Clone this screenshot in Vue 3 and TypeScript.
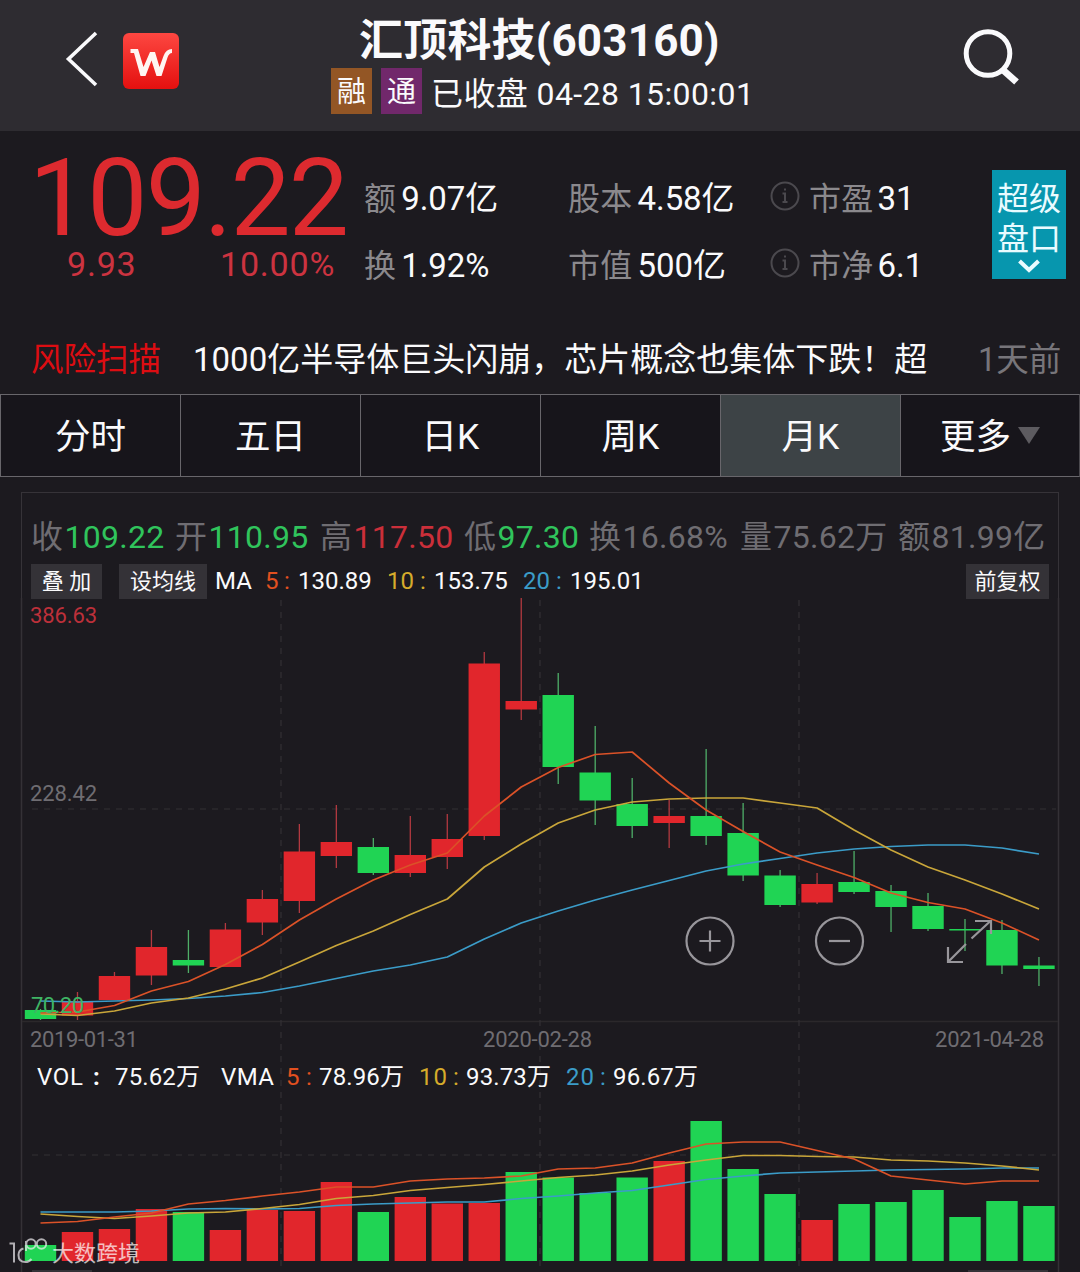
<script setup lang="ts">
type Tone = 'up' | 'down'
// [high, body top, body bottom, low, tone, volume top, volume tone]
type Bar = [number, number, number, number, Tone, number, Tone]

const bars: Bar[] = [
  [1009, 1010, 1019, 1020, 'down', 1245, 'down'],
  [992, 1001, 1015.5, 1020, 'up', 1232, 'up'],
  [972, 976, 1000, 1000, 'up', 1229, 'up'],
  [930, 947, 975.5, 985, 'up', 1209, 'up'],
  [930, 960, 965.5, 973, 'down', 1212, 'down'],
  [923, 929.5, 967, 967, 'up', 1230, 'up'],
  [890, 899, 922.5, 935, 'up', 1210, 'up'],
  [824, 851.5, 901, 913, 'up', 1211, 'up'],
  [805, 842, 856, 868, 'up', 1182, 'up'],
  [838, 847, 873, 875, 'down', 1212, 'down'],
  [816, 855, 873, 877, 'up', 1197, 'up'],
  [814, 839, 857, 869, 'up', 1203.5, 'up'],
  [652, 663.5, 836, 840, 'up', 1203, 'up'],
  [598, 701, 709.5, 720, 'up', 1172, 'down'],
  [673, 695, 767, 784, 'down', 1177.5, 'down'],
  [726, 772.5, 800.5, 825, 'down', 1193, 'down'],
  [778, 804, 826, 838, 'down', 1177.5, 'down'],
  [800, 816, 823, 848, 'up', 1161, 'up'],
  [749, 816, 836, 845, 'down', 1121, 'down'],
  [803, 833, 875.5, 881, 'down', 1169, 'down'],
  [870, 875.5, 905, 907, 'down', 1194, 'down'],
  [873, 884, 902.5, 904, 'up', 1220, 'up'],
  [851, 882, 892, 894, 'down', 1204, 'down'],
  [885, 891, 907, 932, 'down', 1202, 'down'],
  [893, 906, 929, 931, 'down', 1190, 'down'],
  [919, 929, 930.5, 951, 'down', 1217, 'down'],
  [920, 930, 965.5, 974, 'down', 1201, 'down'],
  [957, 965.5, 969, 986, 'down', 1206, 'down'],
]

const cx = (i: number): number => 40.5 + i * 36.98
const path = (ys: number[]): string => ys.map((y, i) => `${cx(i).toFixed(1)},${y}`).join(' ')

const lines: { tone: string; ys: number[] }[] = [
  { tone: 'ma20', ys: [1001, 1002, 1001, 1000, 998.5, 996, 992.5, 986, 978.5, 971, 965, 957, 939, 923, 911, 900, 890, 880.5, 871, 864, 858.5, 853, 849, 846.5, 845, 845, 848, 854] },
  { tone: 'ma10', ys: [1014, 1015.5, 1011, 1003, 998, 989, 978, 962, 945.5, 931, 914.5, 899, 867, 844, 823, 810, 802, 799, 798, 798, 803, 808, 830, 850, 867, 880, 894, 909] },
  { tone: 'ma5', ys: [1013, 1012, 1005.5, 991, 981.5, 964.5, 944.5, 920, 899, 880, 865, 853, 816, 787, 767.5, 754.5, 752, 783, 810, 831.5, 852, 865, 877.5, 893, 902.5, 909, 923, 940] },
  { tone: 'ma20', ys: [1212, 1212, 1212, 1211, 1209, 1208.5, 1209, 1208.5, 1205.5, 1204, 1203, 1202, 1202, 1198.5, 1196, 1193, 1190.5, 1185, 1179.5, 1176, 1173, 1172, 1171, 1170, 1169.5, 1169, 1168, 1168] },
  { tone: 'ma10', ys: [1214, 1216.5, 1218.5, 1216, 1213, 1212, 1208.5, 1204.5, 1198.5, 1195.5, 1190.5, 1187.5, 1184.5, 1181, 1177.5, 1175, 1171, 1165, 1160, 1155.5, 1155.5, 1156.5, 1157, 1160, 1161, 1163, 1166, 1170] },
  { tone: 'ma5', ys: [1223, 1221.5, 1217, 1213, 1204, 1200.5, 1196, 1192, 1187, 1187, 1181, 1179, 1178, 1176, 1169, 1168, 1163, 1153, 1144, 1142, 1142, 1150.5, 1159, 1176, 1180, 1184, 1181, 1181] },
]

const stats = [
  [{ k: '额', v: '9.07亿' }, { k: '股本', v: '4.58亿' }, { k: '市盈', v: '31', info: true }],
  [{ k: '换', v: '1.92%' }, { k: '市值', v: '500亿' }, { k: '市净', v: '6.1', info: true }],
]

const tabs = ['分时', '五日', '日K', '周K', '月K', '更多']

const ohlc = [
  { k: '收', v: '109.22', c: 'green' },
  { k: '开', v: '110.95', c: 'green' },
  { k: '高', v: '117.50', c: 'red' },
  { k: '低', v: '97.30', c: 'green' },
  { k: '换', v: '16.68%', c: 'dim' },
  { k: '量', v: '75.62万', c: 'dim' },
  { k: '额', v: '81.99亿', c: 'dim' },
]

// Legend tokens: text, x, rendered length, tone
const vol: [string, number, number, string][] = [
  ['VOL', 37, 46, 'w'], [':', 93, 6, 'w bold'], ['75.62万', 115, 85, 'w'], ['VMA', 221, 53, 'w'],
  ['5', 286, 14, 'o'], [':', 306, 6, 'o'], ['78.96万', 319, 85, 'w'],
  ['10', 419, 28, 'y'], [':', 453, 6, 'y'], ['93.73万', 466, 85, 'w'],
  ['20', 566, 28, 'b'], [':', 600, 6, 'b'], ['96.67万', 613, 85, 'w'],
]
</script>

<template>
  <div class="app">
    <header class="top">
      <div class="left">
        <svg class="back" width="34" height="58" viewBox="0 0 34 58"><path d="M31 3 3.500 29 31 55" /></svg>
        <div class="logo">
          <svg width="56" height="56" viewBox="0 0 56 56"><path d="M7.500 16H15l5.500 18L27 19h5l4.500 15 4-11q2.500-7 8.500-7v4q-3 0-4.500 4.500L38.500 43h-5L28.500 27.500 22.500 43h-5L11 20H7.500z" /></svg>
        </div>
      </div>
      <div class="center">
        <h1>汇顶科技(603160)</h1>
        <div class="sub">
          <span class="badge rong">融</span><span class="badge tong">通</span><span class="state">已收盘 04-28 15:00:01</span>
        </div>
      </div>
      <svg class="search" width="58" height="60" viewBox="0 0 58 60"><circle cx="26" cy="26.500" r="21.800" /><path d="M41 43 54.500 55" /></svg>
    </header>

    <section class="quote">
      <div class="price">
        <div class="big">109.22</div>
        <div class="chg"><span class="abs">9.93</span><span>10.00%</span></div>
      </div>
      <div class="stats">
        <div v-for="(row, r) in stats" :key="r" class="srow">
          <div v-for="s in row" :key="s.k" class="stat">
            <svg v-if="'info' in s" class="info" width="30" height="30" viewBox="0 0 30 30"><circle cx="15" cy="15" r="13.500" /><path d="M15 7.500v2M12.500 12.500H15V21M12.500 21h5" /></svg>
            <span class="k">{{ s.k }}</span><span class="v">{{ s.v }}</span>
          </div>
        </div>
      </div>
      <div class="super">
        <span>超级</span><span>盘口</span>
        <svg width="24" height="14" viewBox="0 0 24 14"><path d="M2.500 2 12 11 21.500 2" /></svg>
      </div>
    </section>

    <section class="news">
      <span class="risk">风险扫描</span>
      <span class="headline">1000亿半导体巨头闪崩，芯片概念也集体下跌！超</span>
      <span class="ago">1天前</span>
    </section>

    <nav class="tabs">
      <div v-for="t in tabs" :key="t" class="tab" :class="{ on: t === '月K' }">
        <span>{{ t }}</span><i v-if="t === '更多'" class="caret"></i>
      </div>
    </nav>

    <main class="panel">
      <div class="ohlc">
        <div v-for="o in ohlc" :key="o.k" class="cell"><span>{{ o.k }}</span><span :class="o.c">{{ o.v }}</span></div>
      </div>
      <div class="tools">
        <span class="btn add">叠 加</span>
        <span class="btn avg">设均线</span>
        <div class="ma">
          <span>MA</span>
          <span class="o">5</span><span class="o">:</span><span>130.89</span>
          <span class="y">10</span><span class="y">:</span><span>153.75</span>
          <span class="b">20</span><span class="b">:</span><span>195.01</span>
        </div>
        <span class="btn adj">前复权</span>
      </div>
    </main>

    <div class="chart">
      <svg width="1080" height="674" viewBox="0 598 1080 674">
        <g class="frame"><path d="M21.500 598V1272M1058.500 598V1272" /><path class="base" d="M22 1021.500H1058" /></g>
        <g class="grid"><path d="M281 600V1272M540 600V1272M799 600V1272" /><path d="M32 809H1056M32 1155H1056" /></g>
        <g v-for="(b, i) in bars" :key="i">
          <line :class="['wick', b[4]]" :x1="cx(i)" :x2="cx(i)" :y1="b[0]" :y2="b[3]" />
          <rect :class="b[4]" :x="cx(i) - 15.7" :y="b[1]" width="31.400" :height="b[2] - b[1]" />
          <rect :class="b[6]" :x="cx(i) - 15.7" :y="b[5]" width="31.400" :height="1261 - b[5]" />
        </g>
        <polyline v-for="(l, i) in lines" :key="'l' + i" :class="['line', l.tone]" :points="path(l.ys)" />

        <g class="axis">
          <text class="hi" x="30" y="623" textLength="67">386.63</text>
          <text x="30" y="801" textLength="67">228.42</text>
          <text class="lo" x="31" y="1013" textLength="53">70.20</text>
          <text x="30" y="1047" textLength="108">2019-01-31</text>
          <text x="483" y="1047" textLength="109">2020-02-28</text>
          <text x="935" y="1047" textLength="109">2021-04-28</text>
        </g>
        <g class="vol">
          <text v-for="(t, i) in vol" :key="'t' + i" :class="t[3]" :x="t[1]" y="1085" :textLength="t[2]">{{ t[0] }}</text>
        </g>

        <g class="ctrl">
          <circle cx="710" cy="941" r="23.500" /><path d="M699.500 941h21M710 930.500v21" />
          <circle cx="839.500" cy="941" r="23.500" /><path d="M829 941h21" />
          <path d="M948 962 966 944M971.500 938.500 990.500 921M948 947v15h15M975 921h16v13" />
        </g>
        <path class="stub" d="M32 1271H92M968 1271H1048" />
        <g class="mark">
          <path d="M9.500 1243.500h4.500v19M23.500 1248.500q-5 1.500-5 6.500 0 7 7 7 3.500 0 6-3" />
          <path d="M26 1241v10" />
          <circle cx="31" cy="1244" r="4.700" /><circle cx="41.500" cy="1244" r="4.700" />
          <text x="52" y="1261" textLength="88">大数跨境</text>
        </g>
      </svg>
    </div>
  </div>
</template>

<style>
body { background: #1c1a1f; }
</style>

<style scoped>
.app {
  width: 1080px;
  height: 1272px;
  overflow: hidden;
  display: flex;
  flex-direction: column;
  background: #1c1a1f;
  color: #fafafc;
  font-family: Roboto, "Noto Sans CJK SC", sans-serif;
  white-space: nowrap;
}
.app > * { flex: none; }
svg { display: block; fill: none; }

.top {
  height: 131px;
  box-sizing: border-box;
  display: flex;
  align-items: flex-start;
  background: #2e2c31;
  padding: 0 60px 0 65px;
}
.left { display: flex; width: 266px; padding-top: 30px; }
.back { stroke: #fafafc; stroke-width: 3.600; }
.logo {
  width: 56px;
  height: 56px;
  margin: 3px 0 0 24px;
  border-radius: 6px;
  background: linear-gradient(#fd4741, #e4100f);
}
.logo path { fill: #fff5f2; }
.center { flex: 1; }
h1 { margin: 0 0 0 28px; padding-top: 13px; font-size: 44px; line-height: 57px; font-weight: 700; height: 55px; letter-spacing: 0.200px; }
.sub { display: flex; align-items: flex-start; height: 47px; font-size: 32px; }
.badge { width: 41px; height: 46px; line-height: 48px; margin-right: 9px; text-align: center; font-size: 29px; }
.rong { background: #935625; }
.tong { background: #71286b; }
.state { line-height: 50px; padding-top: 1px; letter-spacing: 0.400px; }
.search { margin-top: 27px; stroke: #fafafc; stroke-width: 5; }
.search path { stroke-width: 7; }

.quote { display: flex; height: 189px; padding: 0 14px 0 29px; }
.price { width: 335px; color: #dd2a2f; }
.big { margin-top: 15px; height: 102px; line-height: 106px; font-size: 107px; letter-spacing: -1.800px; }
.chg { display: flex; height: 40px; line-height: 40px; margin-top: -4px; font-size: 34px; color: #cc3340; letter-spacing: 0.800px; }
.abs { width: 191px; padding-left: 38px; box-sizing: border-box; }
.stats { flex: 1; padding-top: 34px; }
.srow { display: flex; height: 67px; line-height: 67px; font-size: 32px; }
.stat { display: flex; align-items: center; width: 204px; }
.stat:nth-child(3) { width: auto; margin-left: -2px; }
.k { color: #8b898d; margin-right: 5px; letter-spacing: 0.300px; padding-top: 1px; }
.v { font-size: 33px; letter-spacing: -0.100px; }
.stat:nth-child(3) .k { margin-right: 4px; }
.info { margin: -5px 9px 0 0; stroke: #4b494e; stroke-width: 2; }
.super {
  width: 74px;
  height: 109px;
  margin-top: 39px;
  display: flex;
  flex-direction: column;
  align-items: center;
  background: #0796ae;
  color: #e9fbff;
  font-size: 32px;
  line-height: 40px;
}
.super span:first-child { margin-top: 9px; }
.super svg { stroke: #e9fbff; stroke-width: 4; }

.news { display: flex; height: 74px; line-height: 80px; padding-left: 31px; font-size: 33px; }
.risk { width: 162px; color: #dc0d12; font-size: 32.500px; }
.headline { width: 785px; }
.ago { color: #77757a; font-size: 32.500px; }

.tabs { display: flex; height: 83px; box-sizing: border-box; border: 1px solid #68666b; border-left: 0; border-right-color: #4b494e; background: #17151b; }
.tab {
  width: 180px;
  flex: none;
  box-sizing: border-box;
  display: flex;
  justify-content: center;
  align-items: center;
  font-size: 35.500px;
  padding-bottom: 4px;
  border-left: 1px solid #68666b;
}
.tab:last-child { width: 179px; }
.on { background: #3d4346; }
.caret { margin: 4px 0 0 7px; border: 11px solid transparent; border-top: 17px solid #5d5b60; border-bottom: 0; }

.panel {
  height: 106px;
  margin: 15px 21px 0;
  box-sizing: border-box;
  border: 1px solid #363338;
  border-bottom: 0;
  padding: 22px 9px 0;
}
.ohlc {
  display: grid;
  grid-template-columns: 144px 145px 144px 125px 151px 158px 150px;
  height: 44px;
  line-height: 44px;
  font-size: 32px;
  color: #6f6d72;
}
.cell { display: flex; }
.cell span:first-child { width: 33.500px; }
.green { color: #30c45c; letter-spacing: 0.300px; }
.red { color: #cb2f3a; letter-spacing: 0.300px; }
.dim { letter-spacing: 0.300px; }
.tools { display: flex; margin-top: 5px; height: 35px; line-height: 35px; }
.btn { background: #343237; text-align: center; font-size: 22px; height: 35px; }
.add { width: 71px; }
.avg { width: 88px; margin: 0 9px 0 17px; }
.adj { width: 83px; margin-left: auto; }
.ma {
  display: grid;
  grid-template-columns: 49px 19px 14px 89px 33px 14px 89px 33px 14px 80px;
  font-size: 24px;
}
.ma span:first-child { margin-left: -1px; }
.o { color: #e2501f; fill: #e2501f; }
.y { color: #d6ab2b; fill: #d6ab2b; }
.b { color: #3b9cc8; fill: #3b9cc8; }
.w { fill: #fafafc; }

.chart { height: 674px; }
.frame { stroke: #343136; stroke-width: 1.500; }
.base { stroke: #2b282b; }
.grid { stroke: #333034; stroke-width: 1.200; stroke-dasharray: 6 6; }
rect.up { fill: #e1262c; }
rect.down { fill: #20d454; }
.wick { stroke-width: 1.300; }
.wick.up { stroke: #b23940; }
.wick.down { stroke: #4fae68; }
.line { stroke-width: 1.700; stroke-linejoin: round; }
.ma5 { stroke: #db5228; }
.ma10 { stroke: #c9a63a; }
.ma20 { stroke: #3b9cc8; }
.axis text { font-size: 22px; fill: #6f6d72; }
.axis .hi { fill: #bd303a; }
.axis .lo { fill: #3fb464; }
.vol text { font-size: 24px; }
.vol .bold { font-weight: 700; }
.ctrl { stroke: #98969b; stroke-width: 2.200; }
.stub { stroke: #343237; stroke-width: 2; }
.mark { opacity: 0.700; stroke: #f0eef2; stroke-width: 2; }
.mark text { font-family: "Noto Sans CJK SC", sans-serif; font-size: 22px; fill: #fff; stroke: none; }
</style>
